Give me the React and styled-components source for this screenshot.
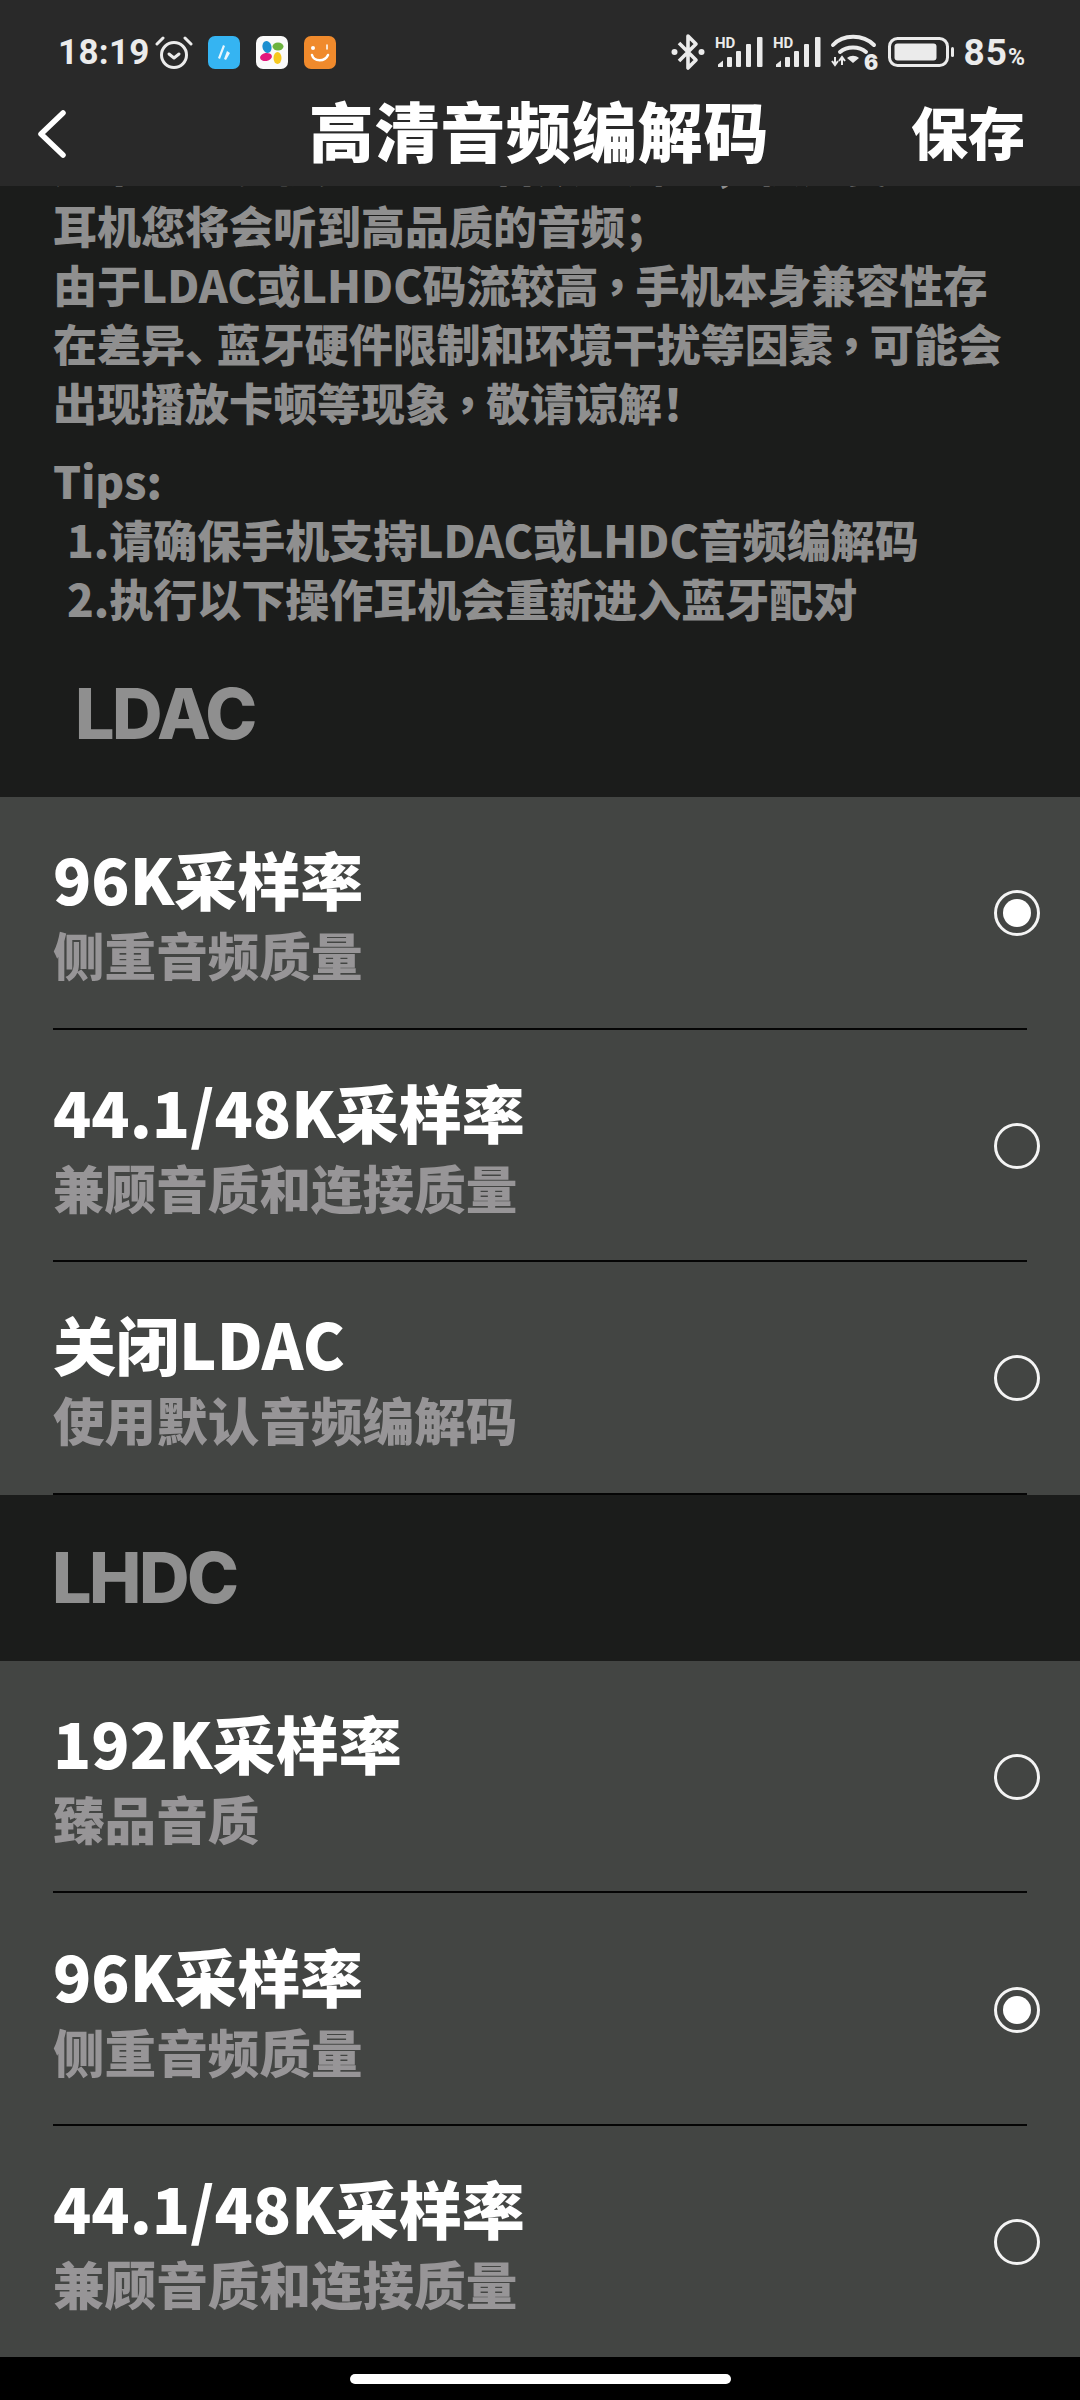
import React from "react";
import styled, { createGlobalStyle } from "styled-components";

const Global = createGlobalStyle`
  html, body { margin: 0; padding: 0; background: #000; }
  * { box-sizing: border-box; }
`;
const CJK = `"Noto Sans CJK SC", "Noto Sans", sans-serif`;

const Page = styled.div`
  width: 1080px; height: 2400px; display: flex; flex-direction: column;
  background: #000; overflow: hidden; font-family: ${CJK};
`;
const TopBar = styled.header`
  height: 186px; flex: none; background: #292929; display: flex; flex-direction: column;
  position: relative; z-index: 1;
`;
const StatusBar = styled.div`
  height: 64px; margin-top: 20px; padding: 0 55px 0 58px; display: flex; align-items: center; justify-content: space-between;
  color: #ebebeb;
`;
const StatusGroup = styled.div`
  display: flex; align-items: center; gap: ${p => p.$gap || 14}px;
`;
const Time = styled.span`
  font: 700 35px/1 Roboto, sans-serif; letter-spacing: 0.3px; margin-right: -10px;
`;
const Pct = styled.span`
  font: 700 37px/1 Roboto, sans-serif; letter-spacing: 1px; display: flex; align-items: baseline;
  small { font-size: 23px; font-weight: 700; letter-spacing: 0; }
`;
const NavBar = styled.div`
  flex: 1; display: grid; grid-template-columns: 1fr auto 1fr; align-items: center; padding: 0 55px 14px 38px;
  color: #fff;
`;
const Title = styled.h1`
  margin: 3px 0 0; font: 900 65px/1 ${CJK}; letter-spacing: 0.8px; padding-left: 15px; white-space: nowrap;
`;
const Save = styled.span`
  justify-self: end; font: 900 57px/1 ${CJK}; margin-top: 4px;
`;
const BackIcon = styled.svg`
  margin-top: 12px; display: block;
`;
const Scroll = styled.main`
  flex: 1; min-height: 0; overflow: hidden; background: #1b1c1b; display: flex; flex-direction: column;
`;
const Intro = styled.div`
  margin-top: -52px; padding: 0 0 3px 53px; color: #8f8f8f; font: 900 44px/59px ${CJK}; flex: none;
`;
const Line = styled.div`
  white-space: nowrap; padding-left: ${p => p.$indent || 0}px; margin-top: ${p => p.$gap || 0}px;
`;
const Comma = styled.span`
  font-family: "Noto Sans CJK TC", sans-serif; letter-spacing: -0.08em; margin-left: -0.08em;
`;
const Pause = styled.span`
  letter-spacing: -0.28em;
`;
const Heading = styled.div`
  flex: none; display: flex; align-items: center; color: #8f8f8f;
  font: 800 70px/1 Inter, sans-serif; letter-spacing: -2.5px;
  padding-left: ${p => p.$left}px; height: 166px;
`;
const List = styled.section`
  flex: none; background: #434543;
`;
const Row = styled.div`
  height: 232.6px; padding: 0 40px 0 53px; display: flex; align-items: center; justify-content: space-between;
  position: relative;
  &::after {
    content: ""; position: absolute; left: 53px; right: 53px; bottom: 0; height: 2px; background: ${p => p.$hideRule ? "transparent" : "#050505"};
  }
`;
const RowText = styled.div`
  display: flex; flex-direction: column; gap: 4px; margin-top: 6px;
`;
const RowTitle = styled.div`
  color: #fff; font: 900 63px/72px ${CJK}; white-space: nowrap;
`;
const RowSub = styled.div`
  color: #979597; font: 900 51.6px/72px ${CJK}; white-space: nowrap;
`;
const Radio = styled.span`
  width: 46px; height: 46px; border-radius: 50%; border: 3px solid #f4f4f4; display: flex; align-items: center; justify-content: center;
  &::before { content: ""; width: 28px; height: 28px; border-radius: 50%; background: ${p => p.$on ? "#fff" : "transparent"}; }
`;
const Footer = styled.footer`
  height: 43px; flex: none; background: #000; display: flex; justify-content: center; padding-top: 17px;
`;
const Pill = styled.div`
  width: 381px; height: 10px; border-radius: 5px; background: #fff;
`;

const Alarm = () => (
  <svg width="38" height="36" viewBox="0 0 38 36" fill="none" stroke="#ebebeb" strokeWidth="3" strokeLinecap="round">
    <circle cx="19" cy="21" r="12.5" />
    <path d="M14 20l5 4 5-4" strokeLinejoin="round" />
    <path d="M2 10l6-6M36 10l-6-6" />
  </svg>
);
const BlueApp = () => (
  <svg width="32" height="33" viewBox="0 0 32 33">
    <rect width="32" height="33" rx="7" fill="#35b4f2" />
    <path d="M15 9l-5 13 2 1 5-13zM19 15l-3 8 2 1 4-7z" fill="#e8f6fd" />
  </svg>
);
const FlowerApp = () => (
  <svg width="32" height="33" viewBox="0 0 32 33">
    <rect width="32" height="33" rx="7" fill="#fafafa" />
    <ellipse cx="11" cy="11" rx="4.5" ry="6" fill="#1c8fd0" transform="rotate(-15 11 11)" />
    <ellipse cx="22" cy="10.5" rx="5.5" ry="4" fill="#6cb33f" />
    <ellipse cx="10" cy="21" rx="6" ry="4" fill="#e2187c" transform="rotate(-10 10 21)" />
    <ellipse cx="21.5" cy="22" rx="4" ry="6" fill="#f6c81e" />
  </svg>
);
const SmileApp = () => (
  <svg width="32" height="33" viewBox="0 0 32 33" fill="none">
    <rect width="32" height="33" rx="7" fill="#f08a2c" />
    <circle cx="9" cy="12" r="2" fill="#fff" />
    <path d="M23 9v4" stroke="#fff" strokeWidth="1.5" strokeLinecap="round" />
    <path d="M8 19c2 7 13 7 16 0" stroke="#fff" strokeWidth="2.5" strokeLinecap="round" />
  </svg>
);
const Bluetooth = () => (
  <svg width="34" height="38" viewBox="0 0 34 38" fill="none" stroke="#ebebeb" strokeWidth="3.6">
    <path d="M8 10l17 17-8 8V3l8 8L8 28" strokeLinejoin="round" />
    <circle cx="3.5" cy="19" r="3" fill="#ebebeb" stroke="none" />
    <circle cx="30.5" cy="19" r="3" fill="#ebebeb" stroke="none" />
  </svg>
);
const HdLabel = styled.text`
  font: 700 15px Roboto, sans-serif; fill: #ebebeb;
`;
const Signal = () => (
  <svg width="48" height="32" viewBox="0 0 48 32" fill="#ebebeb" overflow="visible">
    <HdLabel x="0" y="12">HD</HdLabel>
    <path d="M3 31v-2.500l5-4v6.500z" />
    <rect x="12" y="21" width="5" height="10" rx="1" />
    <rect x="21" y="15" width="5" height="16" rx="1" />
    <rect x="31" y="8" width="5" height="23" rx="1" />
    <rect x="42" y="1" width="5.500" height="30" rx="1" />
  </svg>
);
const WifiSix = styled.text`
  font: 900 21px Inter, sans-serif; fill: #ebebeb;
`;
const Wifi = () => (
  <svg width="47" height="38" viewBox="0 0 47 38" fill="none" overflow="visible">
    <g stroke="#ebebeb" strokeWidth="4" strokeLinecap="round">
      <path d="M2 12C12 1 32 1 43 12" />
      <path d="M9 19c7-6 19-6 26 0" />
    </g>
    <path d="M16 25c4-3 8-3 12 0l-6 5z" fill="#ebebeb" />
    <path d="M4 24v8M1 28l3 4 3-4M11 32v-8M8 28l3-4 3 4" stroke="#ebebeb" strokeWidth="2" />
    <WifiSix x="33" y="37">6</WifiSix>
  </svg>
);
const Battery = () => (
  <svg width="66" height="30" viewBox="0 0 66 30" fill="none">
    <rect x="1.500" y="1.500" width="58" height="27" rx="8" stroke="#ebebeb" strokeWidth="3" />
    <rect x="6.500" y="6.500" width="42" height="17" rx="3" fill="#ebebeb" />
    <rect x="63" y="10" width="3" height="10" rx="1.500" fill="#ebebeb" />
  </svg>
);
const Back = () => (
  <BackIcon width="28" height="48" viewBox="0 0 28 48" fill="none" stroke="#fff" strokeWidth="5.5" strokeLinecap="round" strokeLinejoin="round">
    <path d="M25 3L3 24l22 21" />
  </BackIcon>
);

const ldac = [
  ["96K采样率", "侧重音频质量", true],
  ["44.1/48K采样率", "兼顾音质和连接质量", false],
  ["关闭LDAC", "使用默认音频编解码", false],
];
const lhdc = [
  ["192K采样率", "臻品音质", false],
  ["96K采样率", "侧重音频质量", true],
  ["44.1/48K采样率", "兼顾音质和连接质量", false],
];

const Options = ({ items, openEnd }) => (
  <List>
    {items.map(([t, s, on], i) => (
      <Row key={t} $hideRule={openEnd && i === items.length - 1}>
        <RowText>
          <RowTitle>{t}</RowTitle>
          <RowSub>{s}</RowSub>
        </RowText>
        <Radio $on={on} />
      </Row>
    ))}
  </List>
);

export default function App() {
  return (
    <Page>
      <Global />
      <TopBar>
        <StatusBar>
          <StatusGroup $gap={15}>
            <Time>18:19</Time>
            <Alarm />
            <StatusGroup $gap={16}>
              <BlueApp />
              <FlowerApp />
              <SmileApp />
            </StatusGroup>
          </StatusGroup>
          <StatusGroup $gap={10}>
            <Bluetooth />
            <Signal />
            <Signal />
            <Wifi />
            <Battery />
            <Pct>85<small>%</small></Pct>
          </StatusGroup>
        </StatusBar>
        <NavBar>
          <Back />
          <Title>高清音频编解码</Title>
          <Save>保存</Save>
        </NavBar>
      </TopBar>
      <Scroll>
        <Intro>
          <Line>如果您的手机支持以上音频编解码，使用我们的</Line>
          <Line $gap={3}>耳机您将会听到高品质的音频；</Line>
          <Line>由于LDAC或LHDC码流较高<Comma>，</Comma>手机本身兼容性存</Line>
          <Line>在差异<Pause>、</Pause>蓝牙硬件限制和环境干扰等因素<Comma>，</Comma>可能会</Line>
          <Line>出现播放卡顿等现象<Comma>，</Comma>敬请谅解！</Line>
          <Line $gap={19}>Tips:</Line>
          <Line $indent={14}>1.请确保手机支持LDAC或LHDC音频编解码</Line>
          <Line $indent={14}>2.执行以下操作耳机会重新进入蓝牙配对</Line>
        </Intro>
        <Heading $left={75}>LDAC</Heading>
        <Options items={ldac} />
        <Heading $left={52}>LHDC</Heading>
        <Options items={lhdc} openEnd />
      </Scroll>
      <Footer><Pill /></Footer>
    </Page>
  );
}
